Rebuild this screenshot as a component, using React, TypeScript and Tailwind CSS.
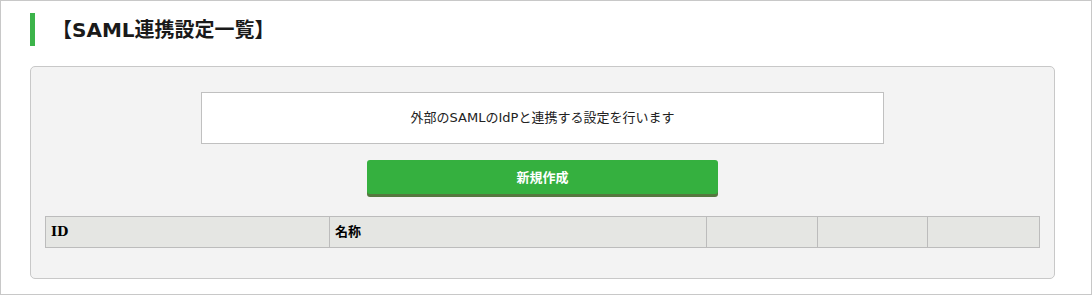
import React from 'react';

const jp = "font-['DejaVu_Sans','Noto_Sans_CJK_JP',sans-serif]";

const columns = [
  { label: 'ID', width: 'w-[284px]' },
  { label: '名称', width: 'w-[377px]' },
  { label: '', width: 'w-[111px]' },
  { label: '', width: 'w-[110px]' },
  { label: '', width: 'w-[112px]' },
];

export default function App() {
  return (
    <div className={`w-[1092px] h-[295px] border border-[#c8c8c8] bg-white pl-[29px] pt-[12px] ${jp}`}>
      <div className="flex items-center h-[33px] border-l-[5px] border-[#3cb44a] pl-[17px]">
        <h1 className="text-[20px] leading-[24px] font-bold text-[#1a1a1a]">【SAML連携設定一覧】</h1>
      </div>

      <div className="mt-[20px] w-[1025px] h-[213px] rounded-[5px] border border-[#c8c8c8] bg-[#f3f3f3] flex flex-col items-center pt-[25px]">
        <div className="w-[683px] h-[52px] border border-[#c0c0c0] bg-white flex items-center justify-center">
          <p className="text-[13px] leading-[18px] text-[#222]">外部のSAMLのIdPと連携する設定を行います</p>
        </div>

        <button
          type="button"
          className="mt-[16px] w-[351px] h-[34px] rounded-[3px] bg-[#35b03f] shadow-[0_3px_0_#55783f] mb-[3px] text-white text-[13px] font-bold leading-none flex items-center justify-center"
        >
          新規作成
        </button>

        <div className="mt-[19px] flex border-y border-l border-[#bcbcbc] bg-[#e5e6e3]">
          {columns.map((c, i) => (
            <div
              key={i}
              className={`${c.width} h-[30px] border-r border-[#bcbcbc] flex items-center px-[5px] text-[13px] font-bold text-black`}
            >
              {c.label === 'ID' ? (
                <span className="font-['DejaVu_Serif',serif]">{c.label}</span>
              ) : (
                c.label
              )}
            </div>
          ))}
        </div>
      </div>
    </div>
  );
}
